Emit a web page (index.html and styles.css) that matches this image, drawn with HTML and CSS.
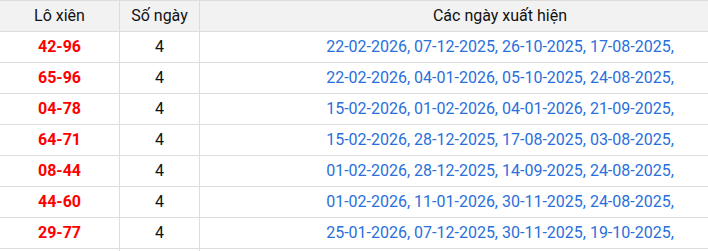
FILE: index.html
```html
<!DOCTYPE html>
<html lang="vi">
<head>
<meta charset="utf-8">
<link rel="stylesheet" href="styles.css">
</head>
<body>
<table class="xien">
  <colgroup>
    <col class="c1"><col class="c2"><col class="c3">
  </colgroup>
  <thead>
    <tr><th>Lô xiên</th><th>Số ngày</th><th class="dates-h">Các ngày xuất hiện</th></tr>
  </thead>
  <tbody>
    <tr><td class="pair">42-96</td><td class="cnt">4</td><td class="dates">22-02-2026, 07-12-2025, 26-10-2025, 17-08-2025,</td></tr>
    <tr><td class="pair">65-96</td><td class="cnt">4</td><td class="dates">22-02-2026, 04-01-2026, 05-10-2025, 24-08-2025,</td></tr>
    <tr><td class="pair">04-78</td><td class="cnt">4</td><td class="dates">15-02-2026, 01-02-2026, 04-01-2026, 21-09-2025,</td></tr>
    <tr><td class="pair">64-71</td><td class="cnt">4</td><td class="dates">15-02-2026, 28-12-2025, 17-08-2025, 03-08-2025,</td></tr>
    <tr><td class="pair">08-44</td><td class="cnt">4</td><td class="dates">01-02-2026, 28-12-2025, 14-09-2025, 24-08-2025,</td></tr>
    <tr><td class="pair">44-60</td><td class="cnt">4</td><td class="dates">01-02-2026, 11-01-2026, 30-11-2025, 24-08-2025,</td></tr>
    <tr><td class="pair">29-77</td><td class="cnt">4</td><td class="dates">25-01-2026, 07-12-2025, 30-11-2025, 19-10-2025,</td></tr>
    <tr><td class="pair">&nbsp;</td><td class="cnt">&nbsp;</td><td class="dates">&nbsp;</td></tr>
  </tbody>
</table>
</body>
</html>
```
FILE: styles.css
```css
html, body {
  margin: 0;
  padding: 0;
  background: #fff;
  overflow: hidden;
}
body {
  font-family: Roboto, "Liberation Sans", sans-serif;
  font-size: 16px;
  color: #222;
}
.xien {
  border-collapse: collapse;
  table-layout: fixed;
  width: 709px;
  margin-left: -1px;
}
.c1 { width: 120px; }
.c2 { width: 80px; }
.c3 { width: 509px; }
.xien th, .xien td {
  border: 1px solid #ddd;
  height: 30px;
  padding: 0;
  box-sizing: border-box;
  text-align: center;
  font-weight: 400;
  line-height: 30px;
  white-space: nowrap;
}
.xien th {
  background: #f2f2f2;
  color: #111;
}
.pair {
  color: #ff0000;
  font-weight: 700 !important;
}
.cnt { color: #111; }
.xien .dates,
.xien .dates-h {
  padding-left: 92px;
}
.dates {
  color: #2a6fdb;
}
```
